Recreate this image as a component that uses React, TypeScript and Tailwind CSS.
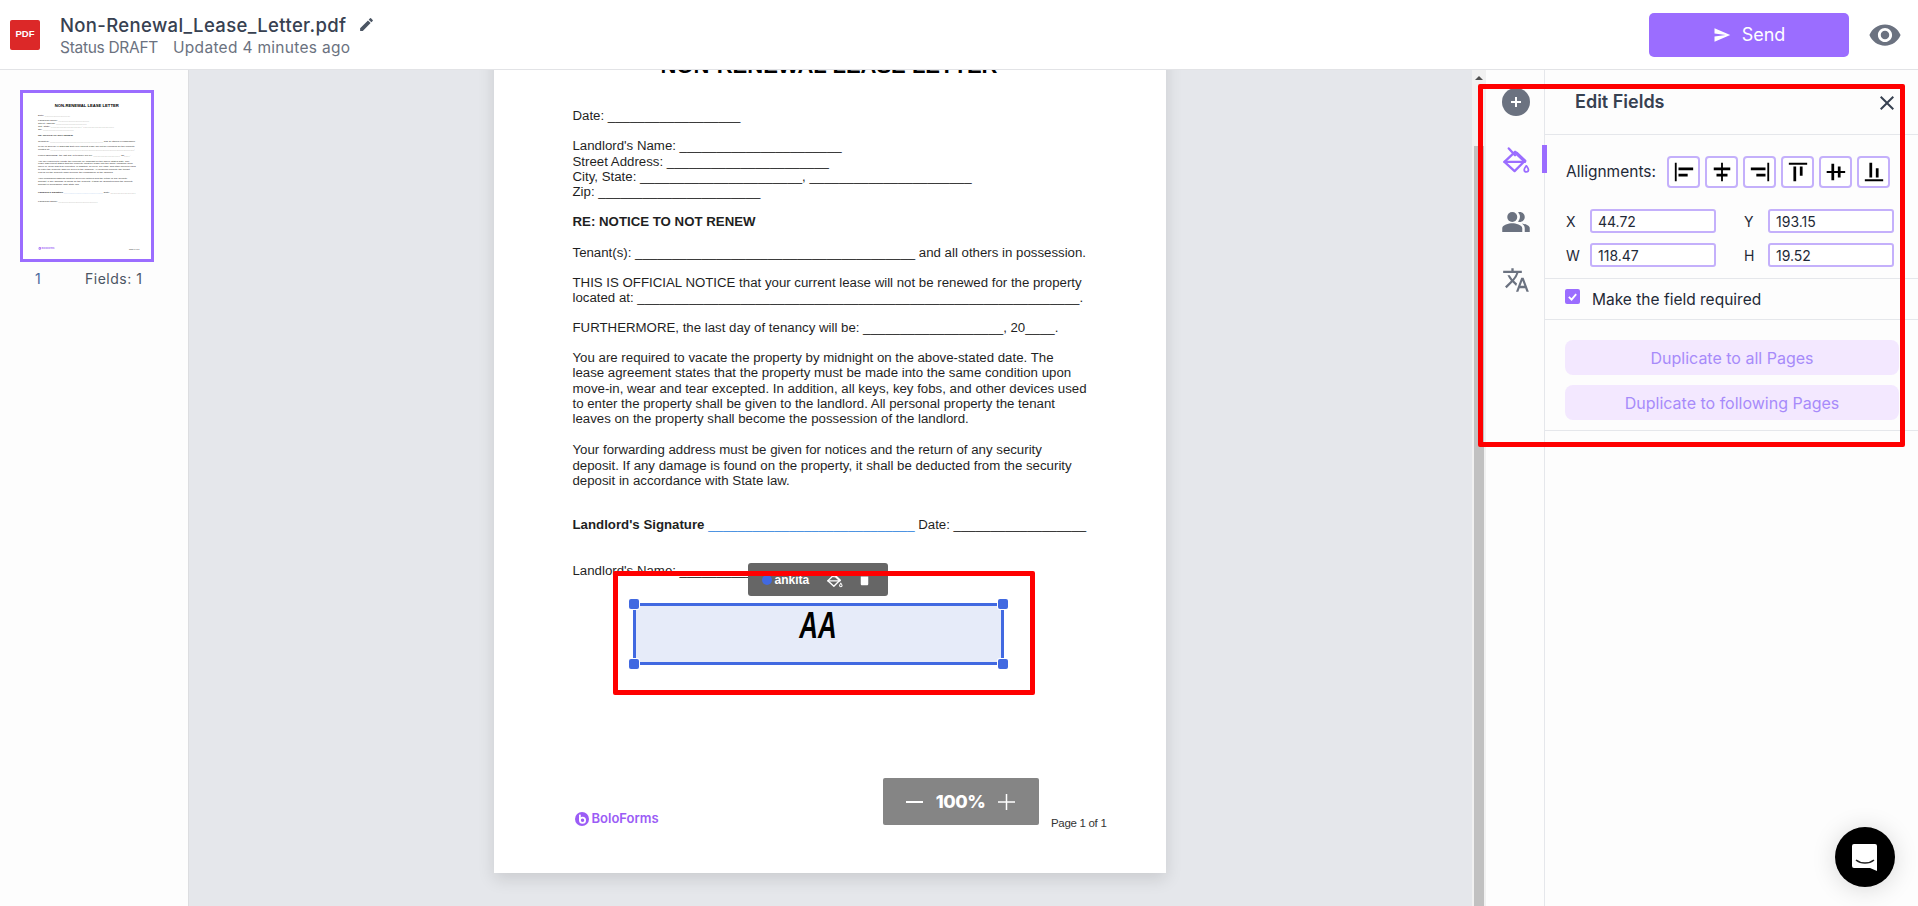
import React from "react";
import {
  MdEdit, MdVisibility, MdClose, MdPeopleAlt, MdTranslate,
  MdAlignHorizontalLeft, MdAlignHorizontalCenter, MdAlignHorizontalRight,
  MdAlignVerticalTop, MdAlignVerticalCenter, MdAlignVerticalBottom, MdDelete, MdSend,
} from "react-icons/md";

const sans = "font-['Inter','Liberation_Sans',sans-serif]";

function PaintIcon({ size, color, className }: { size: number; color: string; className?: string }) {
  return (
    <svg width={size} height={size} viewBox="0 0 28 28" fill="none" stroke={color} strokeWidth="2.4" strokeLinejoin="round" strokeLinecap="round" className={className}>
      <path d="M6 1.5l6.5 7" />
      <path d="M1.5 15.5L12.5 5l10 9.5L12 25z" />
      <path d="M1.5 15.5h21" />
      <path d="M14 6.5l8.5 8" strokeWidth="3.5" />
      <path d="M24.2 19.5c-1.4 2-2.2 3-2.2 4.2a2.2 2.2 0 0 0 4.4 0c0-1.2-.8-2.2-2.2-4.2z" strokeWidth="1.8" />
    </svg>
  );
}

function PageContent() {
  return (
    <div className="flex h-full w-full flex-col bg-white pl-[79px] pr-[80px] font-['Liberation_Sans',sans-serif] text-[13.25px] leading-[15.3px] text-[#1f1f1f] whitespace-nowrap">
      <div className="mt-[52px] text-center text-[22px] leading-[26px] font-bold text-black">NON-RENEWAL LEASE LETTER</div>
      <div className="mt-[29px]">Date: __________________</div>
      <div className="mt-[15px]">Landlord's Name: ______________________</div>
      <div>Street Address: ______________________</div>
      <div>City, State: ______________________, ______________________</div>
      <div>Zip: ______________________</div>
      <div className="mt-[15px] font-bold">RE: NOTICE TO NOT RENEW</div>
      <div className="mt-[15px]">Tenant(s): ______________________________________ and all others in possession.</div>
      <div className="mt-[15px]">THIS IS OFFICIAL NOTICE that your current lease will not be renewed for the property</div>
      <div>located at: ____________________________________________________________.</div>
      <div className="mt-[14px]">FURTHERMORE, the last day of tenancy will be: ___________________, 20____.</div>
      <div className="mt-[15px]">You are required to vacate the property by midnight on the above-stated date. The</div>
      <div>lease agreement states that the property must be made into the same condition upon</div>
      <div>move-in, wear and tear excepted. In addition, all keys, key fobs, and other devices used</div>
      <div>to enter the property shall be given to the landlord. All personal property the tenant</div>
      <div>leaves on the property shall become the possession of the landlord.</div>
      <div className="mt-[16px]">Your forwarding address must be given for notices and the return of any security</div>
      <div>deposit. If any damage is found on the property, it shall be deducted from the security</div>
      <div>deposit in accordance with State law.</div>
      <div className="mt-[29px]"><b>Landlord's Signature</b> <span className="text-[#3b8ae0]">____________________________</span> Date: __________________</div>
      <div className="mt-[30px]">Landlord's Name: ____________________________</div>
      <div className="mt-auto mb-[42px] ml-[2px] -mr-[21px] flex items-start justify-between">
        <div className="flex items-center gap-[3px]">
          <svg width="14" height="16" viewBox="0 0 16 16"><circle cx="8" cy="8" r="8" fill="#9b5cf6" /><circle cx="8.6" cy="9.4" r="3" fill="none" stroke="#fff" strokeWidth="2" /><rect x="4.6" y="3" width="2" height="7" fill="#fff" /></svg>
          <span className={`${sans} text-[13px] font-semibold text-[#9b5cf6]`}>BoloForms</span>
        </div>
        <span className="mt-[5px] text-[11.5px] tracking-[-0.3px] text-[#333]">Page 1 of 1</span>
      </div>
    </div>
  );
}

const alignIcons = [
  MdAlignHorizontalLeft, MdAlignHorizontalCenter, MdAlignHorizontalRight,
  MdAlignVerticalTop, MdAlignVerticalCenter, MdAlignVerticalBottom,
];

function NumField({ label, value }: { label: string; value: string }) {
  return (
    <div className="flex items-center">
      <span className="w-[24px] text-[14px] text-[#1f2937]">{label}</span>
      <div className="flex h-[24px] w-[126px] items-center rounded-[3px] border-2 border-[#c4b0fb] bg-white pl-[6px] text-[14px] text-[#1f2937]">{value}</div>
    </div>
  );
}

export default function App() {
  return (
    <div className={`relative flex h-screen w-full flex-col overflow-hidden bg-white ${sans}`}>
      <header className="flex h-[70px] shrink-0 items-center border-b border-[#e2e3e6] bg-white">
        <div className="ml-[10px] flex h-[30px] w-[30px] items-center justify-center rounded-[2px] bg-[#dc2828] font-['Liberation_Sans',sans-serif] text-[9.5px] font-bold text-white">PDF</div>
        <div className="ml-[20px] flex flex-col">
          <div className="flex items-center gap-[12px]">
            <span className="text-[18.5px] leading-[26px] font-medium text-[#374151] tracking-[0.35px]">Non-Renewal_Lease_Letter.pdf</span>
            <MdEdit size={17} color="#4b5563" />
          </div>
          <div className="flex gap-[15px] text-[15.5px] leading-[20px] text-[#6b7280]">
            <span className="tracking-[-0.3px]">Status DRAFT</span>
            <span className="tracking-[0.3px]">Updated 4 minutes ago</span>
          </div>
        </div>
        <button className="ml-auto flex h-[44px] w-[200px] items-center justify-center gap-[11px] rounded-[5px] bg-[#9b6dff] text-[18px] text-white">
          <MdSend size={18} />
          Send
        </button>
        <MdVisibility size={34} color="#6b7280" className="ml-[19px] mr-[16px]" />
      </header>

      <div className="flex min-h-0 flex-1">
        <aside className="w-[189px] shrink-0 border-r border-[#dcdde0] bg-[#fdfdfd] pl-[20px] pt-[20px]">
          <div className="h-[172px] w-[134px] overflow-hidden border-[3px] border-[#9b6dff] bg-white">
            <div className="h-[872px] w-[672px] origin-top-left scale-[0.19]">
              <PageContent />
            </div>
          </div>
          <div className="mt-[7px] flex text-[14px] leading-[20px] text-[#4b5563]">
            <span className="ml-[15px] w-[50px] text-[#4b6a9b]">1</span>
            <span className="tracking-[0.5px]">Fields: 1</span>
          </div>
        </aside>

        <main className="flex min-w-0 flex-1 justify-center overflow-hidden bg-[#e5e7eb] pr-[2px]">
          <div className="relative -mt-[69px] h-[872px] w-[672px] shrink-0 shadow-[0_6px_16px_rgba(0,0,0,0.12)]">
            <PageContent />
            <div className="absolute left-[254px] top-[562px] flex h-[33px] w-[140px] items-center rounded-[3px] bg-[#666666] pl-[14px] font-['Liberation_Sans',sans-serif] text-white">
              <span className="h-[10px] w-[10px] rounded-full bg-[#4169e1]" />
              <span className="ml-[3px] text-[12px] font-bold">ankita</span>
              <PaintIcon size={16} color="#fff" className="ml-[18px]" />
              <MdDelete size={15} className="ml-[14px]" />
            </div>
            <div className="absolute left-[139px] top-[602px] flex h-[62px] w-[371px] items-start justify-center border-[3px] border-[#4169e1] bg-[#e6ebf9]">
              <span className="mt-[1px] inline-block scale-x-[0.72] font-['Liberation_Sans',sans-serif] text-[36px] leading-[38px] font-bold italic text-black">AA</span>
              <span className="absolute -left-[7px] -top-[7px] h-[10px] w-[10px] rounded-[2px] bg-[#4169e1] ring-1 ring-white" />
              <span className="absolute -right-[7px] -top-[7px] h-[10px] w-[10px] rounded-[2px] bg-[#4169e1] ring-1 ring-white" />
              <span className="absolute -left-[7px] -bottom-[7px] h-[10px] w-[10px] rounded-[2px] bg-[#4169e1] ring-1 ring-white" />
              <span className="absolute -right-[7px] -bottom-[7px] h-[10px] w-[10px] rounded-[2px] bg-[#4169e1] ring-1 ring-white" />
            </div>
            <div className="absolute left-[119px] top-[570px] h-[124px] w-[422px] rounded-[2px] border-[5px] border-[#ff0000]" />
            <div className="absolute left-[389px] top-[777px] flex h-[47px] w-[156px] items-center justify-center gap-[13px] rounded-[2px] bg-[#858585] text-white">
              <span className="h-[2px] w-[17px] bg-white" />
              <span className="text-[18px] font-extrabold tracking-[-0.5px]">100%</span>
              <svg width="17" height="18" viewBox="0 0 17 18"><path d="M0 9h17M8.5 1v16" stroke="#fff" strokeWidth="1.5" /></svg>
            </div>
          </div>
        </main>

        <div className="flex w-[14px] shrink-0 flex-col items-center bg-[#f1f1f1]">
          <svg width="8" height="4" viewBox="0 0 8 4" className="mt-[6px]"><path d="M4 0l4 4H0z" fill="#505050" /></svg>
          <div className="mt-[66px] w-[10px] flex-1 bg-[#c1c1c1]" />
        </div>

        <nav className="flex w-[59px] shrink-0 flex-col items-center border-r border-[#e5e7eb] bg-[#fdfdfd] pl-[2px]">
          <div className="mt-[18px] flex h-[28px] w-[28px] items-center justify-center rounded-full bg-[#6b7280]">
            <svg width="14" height="14" viewBox="0 0 14 14"><path d="M2 7h10M7 2v10" stroke="#fff" strokeWidth="2" /></svg>
          </div>
          <div className="relative mt-[29px] flex h-[30px] w-full items-center justify-center">
            <PaintIcon size={27} color="#9b6dff" />
            <span className="absolute right-[-3px] top-0 h-[28px] w-[5px] bg-[#9b6dff]" />
          </div>
          <MdPeopleAlt size={30} color="#6b7280" className="mt-[32px]" />
          <MdTranslate size={28} color="#6b7280" className="mt-[29px]" />
        </nav>

        <section className="w-[373px] shrink-0 bg-[#fdfdfd]">
          <div className="flex h-[65px] items-start border-b border-[#e5e7eb] pt-[20px]">
            <h2 className="ml-[30px] text-[18px] leading-[24px] font-semibold text-[#374151]">Edit Fields</h2>
            <MdClose size={24} color="#374151" className="ml-auto mr-[19px] mt-[1px]" />
          </div>
          <div className="flex items-center pl-[21px] pt-[21px]">
            <span className="w-[101px] text-[15.5px] text-[#1f2937]">Allignments:</span>
            <div className="flex gap-[5px]">
              {alignIcons.map((Icon, i) => (
                <div key={i} className="flex h-[32px] w-[33px] items-center justify-center rounded-[4px] border-2 border-[#c4b0fb] bg-white text-black">
                  <Icon size={22} />
                </div>
              ))}
            </div>
          </div>
          <div className="grid grid-cols-[178px_150px] gap-y-[10px] pl-[21px] pt-[21px]">
            <NumField label="X" value="44.72" />
            <NumField label="Y" value="193.15" />
            <NumField label="W" value="118.47" />
            <NumField label="H" value="19.52" />
          </div>
          <div className="mt-[11px] flex h-[42px] items-start border-y border-[#e5e7eb] pl-[20px] pt-[10px]">
            <div className="flex h-[15px] w-[15px] items-center justify-center rounded-[2px] bg-[#9b6dff]">
              <svg width="11" height="11" viewBox="0 0 12 12"><path d="M2 6.5l3 3 5-6" fill="none" stroke="#fff" strokeWidth="2" /></svg>
            </div>
            <span className="ml-[12px] text-[15.5px] leading-[22px] text-[#1f2937]">Make the field required</span>
          </div>
          <div className="flex flex-col gap-[10px] border-b border-[#e5e7eb] pb-[10px] pl-[20px] pr-[19px] pt-[20px]">
            <button className="h-[35px] rounded-[8px] bg-[#f3e8ff] text-[16px] text-[#a78bfa]">Duplicate to all Pages</button>
            <button className="h-[35px] rounded-[8px] bg-[#f3e8ff] text-[16px] text-[#a78bfa]">Duplicate to following Pages</button>
          </div>
        </section>
      </div>

      <div className="absolute left-[1478px] top-[84px] h-[363px] w-[427px] rounded-[2px] border-[5px] border-[#ff0000]" />

      <div className="absolute left-[1835px] top-[827px] flex h-[60px] w-[60px] items-center justify-center rounded-full bg-black shadow-[0_2px_24px_rgba(0,0,0,0.15)]">
        <svg width="28" height="30" viewBox="0 0 28 30">
          <path d="M3 2h21a2 2 0 0 1 2 2v25l-7-3H3a2 2 0 0 1-2-2V4a2 2 0 0 1 2-2z" fill="#fff" />
          <path d="M5 18c5 4 13 4 18 0" fill="none" stroke="#222" strokeWidth="1.6" />
        </svg>
      </div>
    </div>
  );
}
